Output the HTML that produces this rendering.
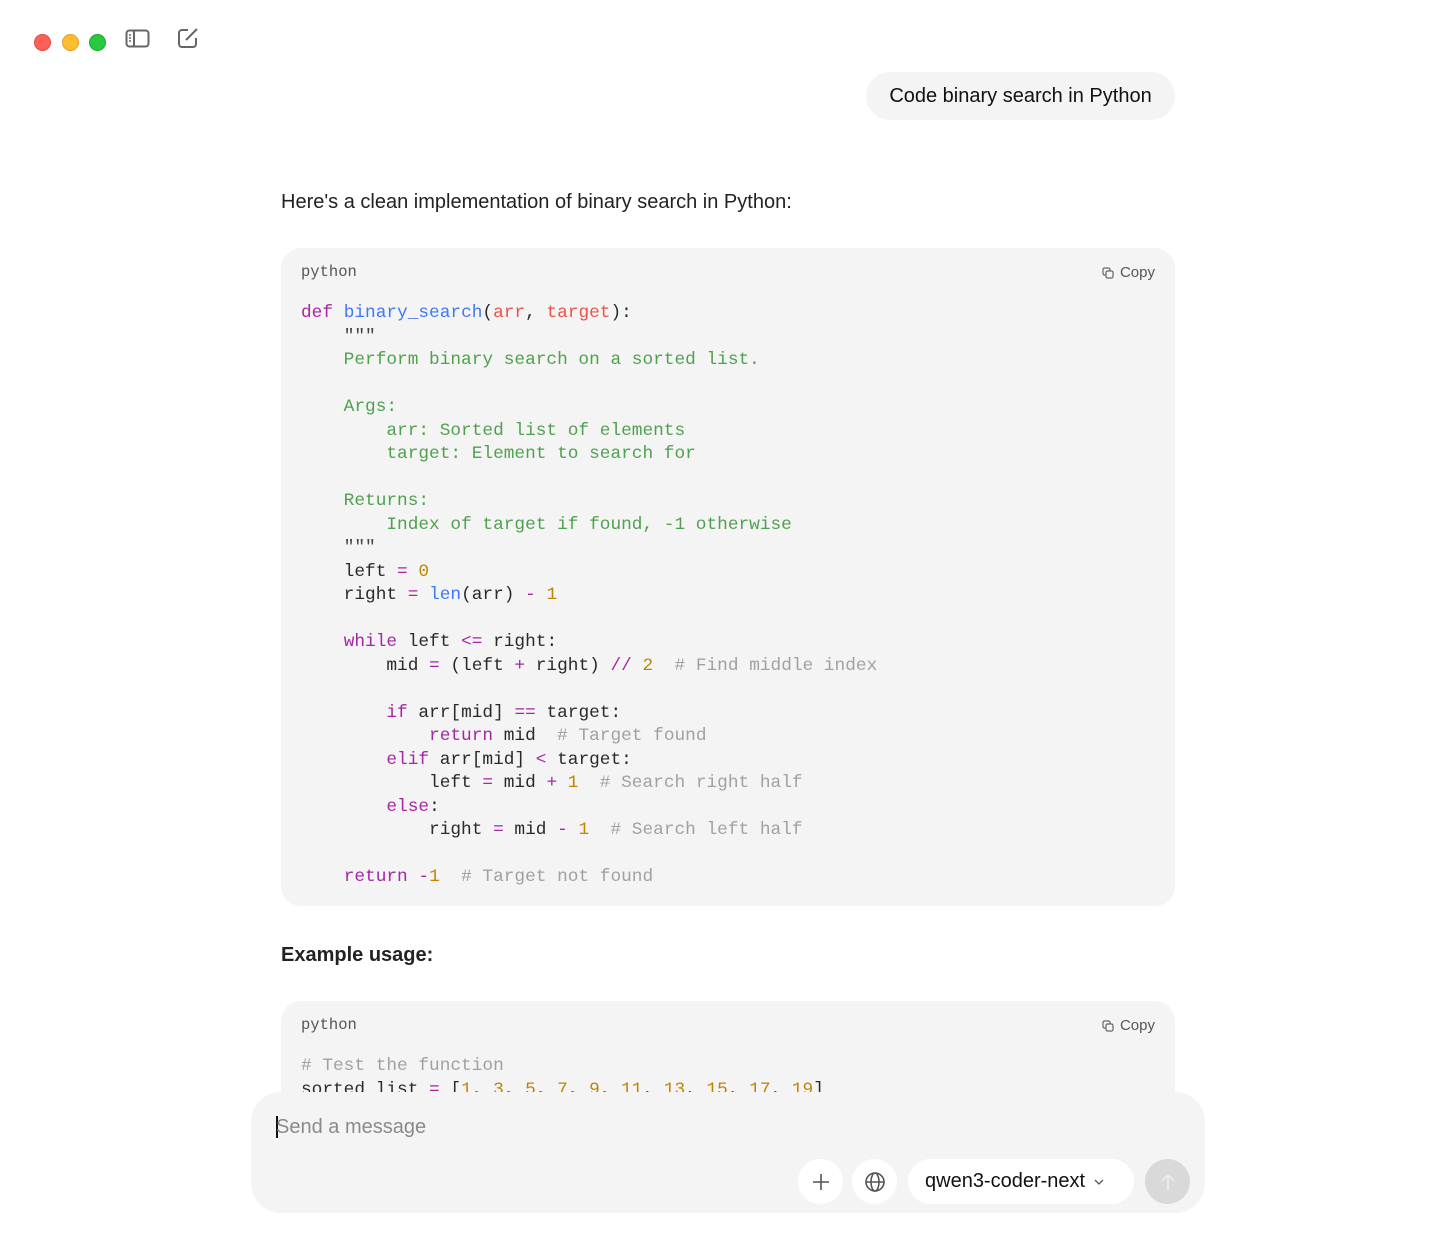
<!DOCTYPE html>
<html><head><meta charset="utf-8"><style>
*{margin:0;padding:0;box-sizing:border-box}
body{width:1456px;height:1235px;background:#fff;font-family:"Liberation Sans",sans-serif;color:#111;position:relative;overflow:hidden}
.dot{position:absolute;top:34px;width:17px;height:17px;border-radius:50%}
.bubble{position:absolute;left:866px;top:72px;width:309px;height:48px;border-radius:24px;background:#f4f4f4;font-size:20px;line-height:48px;text-align:center;color:#111}
.p{position:absolute;left:281px;font-size:20px;color:#222}
.code{position:absolute;left:281px;width:894px;background:#f4f4f4;border-radius:20px;overflow:hidden}
.lang{position:absolute;left:20px;top:15px;font-family:"Liberation Mono",monospace;font-size:15.5px;color:#555}
.copy{position:absolute;right:20px;top:16px;font-size:15px;color:#555;display:flex;align-items:center;gap:6px}
pre{position:absolute;left:20px;font-family:"Liberation Mono",monospace;font-size:17.8px;line-height:23.5px;color:#2a2a2a}
.k{color:#a626a4}.f{color:#4078f2}.a{color:#e45649}.s{color:#50a14f}.n{color:#c18401}.c{color:#a0a1a7}.q{color:#444}
.input{position:absolute;left:251px;top:1092px;width:954px;height:121px;border-radius:30px;background:#f4f4f4}
.btn{position:absolute;top:1159px;height:45px;border-radius:23px;background:#fff;display:flex;align-items:center;justify-content:center}
</style></head><body>
<div class="dot" style="left:34px;background:#fe5f57;border:1px solid #e14942"></div>
<div class="dot" style="left:62px;background:#febc2e;border:1px solid #dea123"></div>
<div class="dot" style="left:89px;background:#28c840;border:1px solid #1aab29"></div>
<svg style="position:absolute;left:125px;top:29px" width="26" height="20" viewBox="0 0 26 20"><rect x="1.5" y="1.5" width="22" height="16" rx="3" fill="none" stroke="#666" stroke-width="2"/><line x1="9" y1="2" x2="9" y2="17" stroke="#666" stroke-width="2"/><line x1="4" y1="6" x2="6" y2="6" stroke="#666" stroke-width="1.5"/><line x1="4" y1="9" x2="6" y2="9" stroke="#666" stroke-width="1.5"/><line x1="4" y1="12" x2="6" y2="12" stroke="#666" stroke-width="1.5"/></svg>
<svg style="position:absolute;left:177px;top:27px" width="24" height="22" viewBox="0 0 24 22"><path d="M11 3H5a3 3 0 0 0-3 3v11a3 3 0 0 0 3 3h11a3 3 0 0 0 3-3v-6" fill="none" stroke="#666" stroke-width="2"/><path d="M9 13l11-11" stroke="#666" stroke-width="2"/></svg>

<div class="bubble">Code binary search in Python</div>
<div class="p" style="top:191px">Here's a clean implementation of binary search in Python:</div>

<div class="code" style="top:248px;height:658px">
<div class="lang">python</div>
<div class="copy"><svg width="12" height="12" viewBox="0 0 12 12"><rect x="1" y="1" width="7" height="7" rx="1.5" fill="none" stroke="#666" stroke-width="1.2"/><rect x="4" y="4" width="7" height="7" rx="1.5" fill="#f4f4f4" stroke="#666" stroke-width="1.2"/></svg>Copy</div>
<pre style="top:54px"><span class="k">def</span> <span class="f">binary_search</span>(<span class="a">arr</span>, <span class="a">target</span>):
    <span class="q">"""</span>
<span class="s">    Perform binary search on a sorted list.

    Args:
        arr: Sorted list of elements
        target: Element to search for

    Returns:
        Index of target if found, -1 otherwise</span>
    <span class="q">"""</span>
    left <span class="k">=</span> <span class="n">0</span>
    right <span class="k">=</span> <span class="f">len</span>(arr) <span class="k">-</span> <span class="n">1</span>

    <span class="k">while</span> left <span class="k">&lt;=</span> right:
        mid <span class="k">=</span> (left <span class="k">+</span> right) <span class="k">//</span> <span class="n">2</span>  <span class="c"># Find middle index</span>

        <span class="k">if</span> arr[mid] <span class="k">==</span> target:
            <span class="k">return</span> mid  <span class="c"># Target found</span>
        <span class="k">elif</span> arr[mid] <span class="k">&lt;</span> target:
            left <span class="k">=</span> mid <span class="k">+</span> <span class="n">1</span>  <span class="c"># Search right half</span>
        <span class="k">else</span>:
            right <span class="k">=</span> mid <span class="k">-</span> <span class="n">1</span>  <span class="c"># Search left half</span>

    <span class="k">return</span> <span class="k">-</span><span class="n">1</span>  <span class="c"># Target not found</span></pre>
</div>

<div class="p" style="top:944px;font-weight:bold">Example usage:</div>

<div class="code" style="top:1001px;height:200px">
<div class="lang">python</div>
<div class="copy"><svg width="12" height="12" viewBox="0 0 12 12"><rect x="1" y="1" width="7" height="7" rx="1.5" fill="none" stroke="#666" stroke-width="1.2"/><rect x="4" y="4" width="7" height="7" rx="1.5" fill="#f4f4f4" stroke="#666" stroke-width="1.2"/></svg>Copy</div>
<pre style="top:54px"><span class="c"># Test the function</span>
sorted_list <span class="k">=</span> [<span class="n">1</span>, <span class="n">3</span>, <span class="n">5</span>, <span class="n">7</span>, <span class="n">9</span>, <span class="n">11</span>, <span class="n">13</span>, <span class="n">15</span>, <span class="n">17</span>, <span class="n">19</span>]</pre>
</div>
<div style="position:absolute;left:0;top:1092px;width:1456px;height:143px;background:#fff"></div>

<div class="input"></div>
<div style="position:absolute;left:276px;top:1116px;width:2px;height:22px;background:#111"></div>
<div style="position:absolute;left:276px;top:1116px;font-size:20px;color:#8a8a8a">Send a message</div>
<div class="btn" style="left:798px;width:45px"><svg width="20" height="20" viewBox="0 0 20 20"><path d="M10 2v16M2 10h16" stroke="#555" stroke-width="1.6"/></svg></div>
<div class="btn" style="left:852px;width:45px"><svg width="22" height="22" viewBox="0 0 22 22" fill="none" stroke="#555" stroke-width="1.6"><circle cx="11" cy="11" r="9"/><ellipse cx="11" cy="11" rx="4" ry="9"/><path d="M2 11h18"/></svg></div>
<div class="btn" style="left:908px;width:226px;font-size:20px;color:#111;justify-content:flex-start;padding-left:17px">qwen3-coder-next<svg style="margin-left:9px" width="10" height="8" viewBox="0 0 10 8"><path d="M1 2l4 4 4-4" fill="none" stroke="#555" stroke-width="1.3"/></svg></div>
<div class="btn" style="left:1145px;width:45px;background:#d9d9d9"><svg width="16" height="20" viewBox="0 0 16 20"><path d="M8 18V3M2 9l6-6 6 6" fill="none" stroke="#eee" stroke-width="1.6"/></svg></div>
</body></html>
